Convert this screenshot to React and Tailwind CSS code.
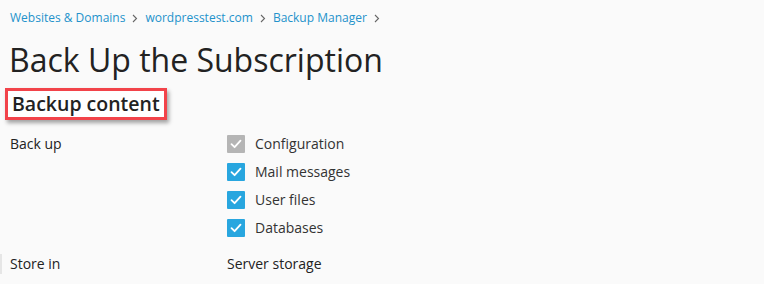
import React from 'react';

const crumbs = ['Websites & Domains', 'wordpresstest.com', 'Backup Manager'];

const items = [
  { label: 'Configuration', disabled: true },
  { label: 'Mail messages' },
  { label: 'User files' },
  { label: 'Databases' },
];

function Check({ disabled }) {
  return (
    <span className={`flex h-[18px] w-[18px] items-center justify-center rounded-[1px] ${disabled ? 'bg-[#b5b5b5]' : 'bg-[#28a6df]'}`}>
      <svg width="12" height="10" viewBox="0 0 12 10" fill="none">
        <path d="M1.5 5.2 L4.6 8.2 L10.5 1.6" stroke="white" strokeWidth="1.8" strokeLinecap="round" strokeLinejoin="round" />
      </svg>
    </span>
  );
}

function Chevron() {
  return (
    <svg width="6" height="9" viewBox="0 0 6 9" fill="none" className="mx-[7px]">
      <path d="M1 1 L4.5 4.5 L1 8" stroke="#666" strokeWidth="1.1" />
    </svg>
  );
}

export default function App() {
  return (
    <div className="h-[284px] w-[764px] overflow-hidden bg-[#fafafa] font-['Open_Sans',sans-serif] text-[#222]">
      <div className="flex items-center pl-[10px] pt-[10px] text-[12px] leading-[16px] text-[#2392cb]">
        {crumbs.map((c) => (
          <span key={c} className="flex items-center">
            {c}
            <Chevron />
          </span>
        ))}
      </div>
      <h1 className="mt-[12px] pl-[9px] text-[32px] font-normal leading-[44px] text-[#222]">
        Back Up the Subscription
      </h1>
      <div className="mt-[6px] ml-[5px] inline-flex border-[3px] border-[#f2434a] bg-white px-[4px] shadow-[2px_3px_4px_rgba(0,0,0,0.35)]">
        <h2 className="text-[19.5px] font-semibold leading-[26px] text-[#222]">Backup content</h2>
      </div>
      <div className="mt-[10px] flex text-[14px] leading-[20px]">
        <div className="w-[227px] pl-[10px] pt-[4px]">Back up</div>
        <div className="flex flex-col gap-[8px] pt-[4px]">
          {items.map((it) => (
            <div key={it.label} className="flex items-center gap-[10px]">
              <Check disabled={it.disabled} />
              <span className="text-[#333]">{it.label}</span>
            </div>
          ))}
        </div>
      </div>
      <div className="mt-[16px] flex border-l-2 border-[#e6e6e6] text-[14px] leading-[20px]">
        <div className="w-[225px] pl-[8px]">Store in</div>
        <div>Server storage</div>
      </div>
    </div>
  );
}
